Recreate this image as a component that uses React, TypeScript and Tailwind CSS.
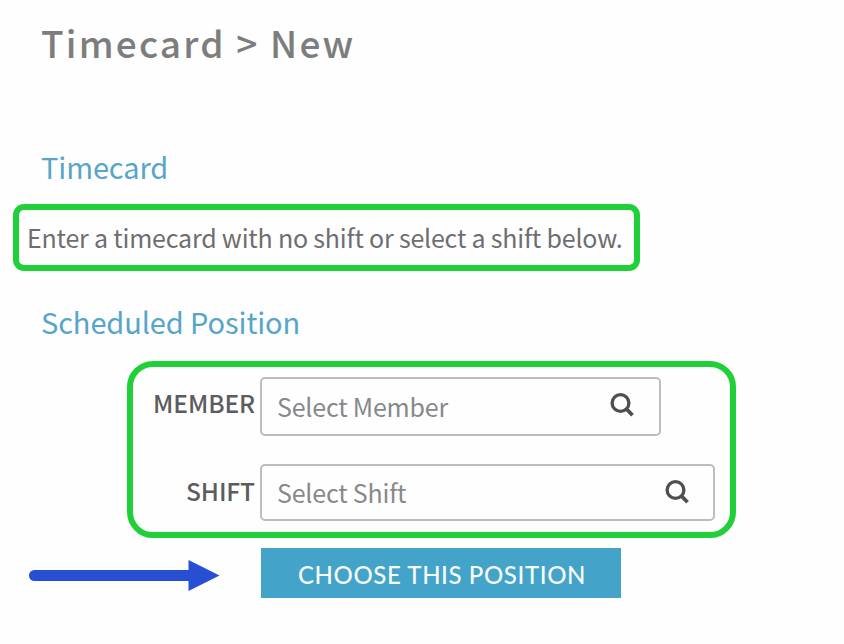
function SearchIcon() {
  return (
    <svg className="h-7 w-7 shrink-0" viewBox="0 0 28 28" fill="none" stroke="#4f4f52">
      <circle cx="11.5" cy="12" r="8.4" strokeWidth="3.3" />
      <path d="M17.200 17.800l6.300 6.500" strokeWidth="3.8" />
    </svg>
  )
}

type LookupProps = {
  label: string
  placeholder: string
  labelClass: string
  boxClass: string
  textClass: string
}

function LookupField({ label, placeholder, labelClass, boxClass, textClass }: LookupProps) {
  return (
    <div className="flex items-start">
      <label className={`w-[122px] shrink-0 text-right text-[24.5px] font-medium tracking-[-0.1px] text-[#5c5c5f] ${labelClass}`}>
        {label}
      </label>
      <div className={`ml-[5px] flex justify-between rounded-[5px] border-2 border-[#bcbcc1] pl-[15px] ${boxClass}`}>
        <span className={`text-[25px] tracking-[-0.2px] text-[#88888b] ${textClass}`}>{placeholder}</span>
        <SearchIcon />
      </div>
    </div>
  )
}

export default function App() {
  return (
    <div className="h-[644px] w-[844px] overflow-hidden bg-[#fefefe] font-['Noto_Sans_CJK_SC',sans-serif] whitespace-nowrap">
      <h1 className="ml-[41px] pt-[14px] text-[37px] leading-[56px] font-medium tracking-[2.2px] text-[#7d7d7d]">
        Timecard &gt; New
      </h1>

      <h2 className="mt-[76px] ml-[41px] text-[29px] leading-10 tracking-[-0.1px] text-[#57a5c9]">Timecard</h2>
      <p className="mt-[18px] ml-[13px] h-[67px] w-[627px] rounded-[11px] border-6 border-[#20d038] pl-2 text-[25px] leading-[55px] tracking-[-0.2px] text-[#6e6e71]">
        Enter a timecard with no shift or select a shift below.
      </p>

      <h2 className="mt-[30px] ml-[41px] text-[29px] leading-10 tracking-[-0.1px] text-[#57a5c9]">Scheduled Position</h2>
      <div className="mt-5 ml-[127px] h-[177px] w-[609px] rounded-[26px] border-6 border-[#20d038] pt-[10px]">
        <LookupField
          label="MEMBER"
          placeholder="Select Member"
          labelClass="leading-[51px]"
          boxClass="h-[59px] w-[401px] pt-[12px] pr-[22px]"
          textClass="leading-[30px]"
        />
        <div className="mt-[28px]">
          <LookupField
            label="SHIFT"
            placeholder="Select Shift"
            labelClass="leading-[53px]"
            boxClass="h-[57px] w-[455px] pt-[12px] pr-[21px]"
            textClass="leading-[28px]"
          />
        </div>
      </div>

      <div className="mt-[10px] ml-7 flex items-center">
        <svg className="mt-[3px] h-8 w-[192px]" viewBox="0 0 192 32">
          <path d="M6.500 16.500H165" stroke="#264fd4" strokeWidth="11" strokeLinecap="round" />
          <path d="M160.500 1L191.500 16.500L160.500 32z" fill="#264fd4" />
        </svg>
        <button className="ml-[41px] h-[50px] w-[360px] bg-[#43a3c8] pt-[3px] pl-[2px] font-[Lato,sans-serif] text-[24px] font-medium tracking-[0.6px] text-[#f6fafc]">
          CHOOSE THIS POSITION
        </button>
      </div>
    </div>
  )
}
